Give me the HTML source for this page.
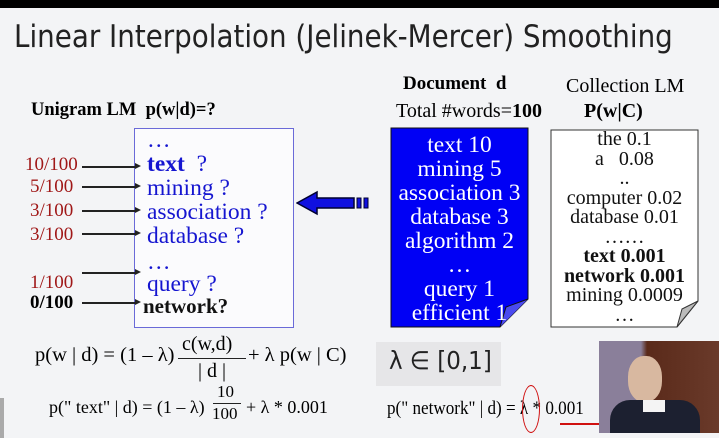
<!DOCTYPE html>
<html><head><meta charset="utf-8"><style>
body{margin:0;width:719px;height:438px;overflow:hidden;background:#f3f4f6;position:relative;font-family:"Liberation Serif",serif;}
.a{position:absolute;white-space:nowrap;}
.t{font-family:"DejaVu Sans","Liberation Sans",sans-serif;}
.r{color:#a01818;font-size:19px;}
.b{color:#1515d0;font-size:23.5px;}
.ar{position:absolute;height:1.5px;background:#222;width:54px;left:82px;}
.ar:after{content:"";position:absolute;right:-5px;top:-3px;border-left:6px solid #222;border-top:3.5px solid transparent;border-bottom:3.5px solid transparent;}
.w{color:#fff;font-size:23.5px;line-height:24px;text-align:center;}
.c{font-size:20px;line-height:19.5px;text-align:center;color:#111;}
</style></head><body>
<div class="a" style="left:0;top:0;width:719px;height:8px;background:#000"></div>
<div class="a t" style="left:14px;top:19px;font-size:31px;color:#222;transform:scaleX(0.895);transform-origin:0 0">Linear Interpolation (Jelinek-Mercer) Smoothing</div>
<div class="a" style="left:31px;top:100px;font-size:18.5px;font-weight:bold">Unigram LM&nbsp; p(w|d)=?</div>
<div class="a" style="left:403px;top:73px;font-size:19px;font-weight:bold">Document&nbsp; d</div>
<div class="a" style="left:396px;top:100px;font-size:20px">Total #words=<b>100</b></div>
<div class="a" style="left:566px;top:75px;font-size:20px">Collection LM</div>
<div class="a" style="left:584px;top:100px;font-size:20px;font-weight:bold">P(w|C)</div>

<div class="a" style="left:134px;top:128px;width:158px;height:198px;border:1.5px solid #6a6ad8;background:#fbfbfd"></div>
<div class="a b" style="left:147px;top:127px">…</div>
<div class="a b" style="left:147px;top:151px"><b>text</b>&nbsp; ?</div>
<div class="a b" style="left:147px;top:175px">mining ?</div>
<div class="a b" style="left:147px;top:199px">association ?</div>
<div class="a b" style="left:147px;top:223px">database ?</div>
<div class="a b" style="left:147px;top:249px">…</div>
<div class="a b" style="left:147px;top:271px">query ?</div>
<div class="a" style="left:143px;top:294px;font-size:21px;font-weight:bold;color:#111">network?</div>

<div class="a r" style="left:25px;top:154px">10/100</div>
<div class="a r" style="left:30px;top:176px">5/100</div>
<div class="a r" style="left:30px;top:200px">3/100</div>
<div class="a r" style="left:30px;top:224px">3/100</div>
<div class="a r" style="left:30px;top:272px">1/100</div>
<div class="a" style="left:30px;top:292px;font-size:19px;font-weight:bold">0/100</div>
<div class="ar" style="top:166px"></div><div class="ar" style="top:186px"></div><div class="ar" style="top:210px"></div><div class="ar" style="top:233px"></div><div class="ar" style="top:272px"></div><div class="ar" style="top:302px"></div>

<svg class="a" style="left:296px;top:190px" width="76" height="26"><path d="M1 13 L21 2 L21 8 L58 8 L58 18 L21 18 L21 24 Z" fill="#1010e0" stroke="#000030" stroke-width="1.5"/><rect x="61" y="8" width="4" height="10" fill="#1010e0" stroke="#000030"/><rect x="68" y="8" width="4" height="10" fill="#1010e0" stroke="#000030"/></svg>

<svg class="a" style="left:390px;top:127px" width="140" height="201"><path d="M1 1 H138 V172 L110 200 H1 Z" fill="#0000f5" stroke="#111" stroke-width="1"/><path d="M110 200 L116 180 L138 172" fill="#4a4af0" stroke="#111"/></svg>
<div class="a w" style="left:391px;top:133px;width:137px">text 10<br>mining 5<br>association 3<br>database 3<br>algorithm 2<br>…<br>query 1<br>efficient 1</div>

<svg class="a" style="left:550px;top:129px" width="150" height="200"><path d="M1 1 H148 V172 L127 198 H1 Z" fill="#fff" stroke="#333" stroke-width="1"/><path d="M127 198 L132 180 L148 172 Z" fill="#bbb" stroke="#333"/></svg>
<div class="a c" style="left:551px;top:130px;width:147px">the 0.1<br>a&nbsp;&nbsp; 0.08<br>..<br>computer 0.02<br>database 0.01<br>……<br><b>text 0.001<br>network 0.001</b><br>mining 0.0009<br>…</div>

<div class="a" style="left:35px;top:344px;font-size:20.5px">p(w | d) = (1 – λ)</div>
<div class="a" style="left:182px;top:333px;font-size:20px">c(w,d)</div>
<div class="a" style="left:178px;top:358px;width:68px;height:1px;background:#222"></div>
<div class="a" style="left:198px;top:360px;font-size:20px">| d |</div>
<div class="a" style="left:248px;top:344px;font-size:20.5px">+ λ p(w | C)</div>
<div class="a" style="left:49px;top:397px;font-size:18px">p(" text" | d) = (1 – λ)</div>
<div class="a" style="left:217px;top:382px;font-size:17px">10</div>
<div class="a" style="left:213px;top:403px;width:28px;height:1px;background:#222"></div>
<div class="a" style="left:212px;top:404px;font-size:17px">100</div>
<div class="a" style="left:246px;top:397px;font-size:18px">+ λ * 0.001</div>
<div class="a" style="left:376px;top:342px;width:125px;height:44px;background:#e6e6e8"></div>
<div class="a t" style="left:389px;top:346px;font-size:25px;color:#222;transform:scaleX(0.92);transform-origin:0 0">λ ∈ [0,1]</div>
<div class="a" style="left:387px;top:398px;font-size:19px;transform:scaleX(0.9);transform-origin:0 0">p(" network" | d) = λ * 0.001</div>
<div class="a" style="left:522px;top:385px;width:16px;height:46px;border:1.5px solid #d01010;border-radius:50%"></div>
<div class="a" style="left:560px;top:423px;width:40px;height:2px;background:#d01010"></div>
<div class="a" style="left:0;top:398px;width:4px;height:40px;background:#aaa"></div>
<div class="a" style="left:599px;top:341px;width:120px;height:92px;background:linear-gradient(90deg,#8a7f9a 0,#8a7f9a 35%,#5a2a1a 40%,#6a3a2a 100%)"></div>
<div class="a" style="left:628px;top:356px;width:34px;height:46px;background:#d8b8a0;border-radius:45%"></div>
<div class="a" style="left:610px;top:400px;width:90px;height:33px;background:#1c2030;border-radius:20px 20px 0 0"></div>
<div class="a" style="left:643px;top:400px;width:22px;height:12px;background:#f4f4f4"></div>
</body></html>
